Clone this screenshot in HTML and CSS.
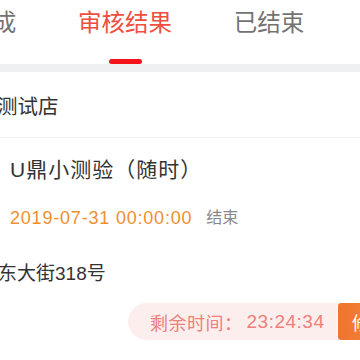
FILE: index.html
```html
<!DOCTYPE html>
<html lang="zh-CN">
<head>
    <meta charset="UTF-8">
    <meta name="viewport" content="width=device-width, initial-scale=1.0">
    <title>审核结果</title>
    <link rel="stylesheet" href="styles.css">
</head>
<body>
    <div class="page">
        <nav class="tabs">
            <div class="tab"><span class="tab-label">待完成</span></div>
            <div class="tab active"><span class="tab-label">审核结果</span></div>
            <div class="tab"><span class="tab-label">已结束</span></div>
        </nav>
        <div class="gap-bar"></div>

        <div class="shop">测试店</div>

        <div class="task">
            <h3 class="task-title">U鼎小测验（随时）</h3>
            <p class="task-time">
                <span class="deadline">2019-07-31 00:00:00</span>
                <span class="deadline-label">结束</span>
            </p>
        </div>

        <p class="address">东大街318号</p>

        <div class="actions">
            <div class="countdown">剩余时间：<span class="clock">23:24:34</span></div>
            <button class="action-btn">修改</button>
        </div>
    </div>
</body>
</html>
```

FILE: styles.css
```css
body {
    margin: 0;
    padding: 0;
    background: #fff;
    font-family: "Liberation Sans", "Noto Sans CJK SC", sans-serif;
    color: #333;
}
.page {
    width: 360px;
    height: 360px;
    overflow: hidden;
}
.tabs {
    display: flex;
    margin-left: -91px;
    height: 64px;
}
.tab {
    flex: none;
    width: 144px;
    display: flex;
    flex-direction: column;
    align-items: center;
}
.tab-label {
    padding-top: 11px;
    font-size: 23.5px;
    line-height: 24px;
    color: #737373;
}
.tab.active .tab-label {
    color: #f04e3e;
}
.tab.active::after {
    content: '';
    width: 33px;
    height: 5px;
    margin-top: 24px;
    border-radius: 3px;
    background: #f5141c;
}
.gap-bar {
    height: 8px;
    background: #eff0f2;
}
.shop {
    height: 65px;
    display: flex;
    align-items: center;
    margin-left: -3px;
    font-size: 20.5px;
    color: #333;
    border-bottom: 1px solid #f0f0f0;
}
.task {
    padding: 17px 10px 0;
}
.task-title {
    margin: 0;
    font-size: 21px;
    line-height: 30px;
    letter-spacing: 1px;
    font-weight: normal;
    color: #333;
}
.task-time {
    display: flex;
    align-items: center;
    margin: 21px 0 0;
    line-height: 24px;
}
.deadline {
    font-size: 18px;
    letter-spacing: 0.8px;
    color: #ef8f30;
}
.deadline-label {
    margin-left: 14px;
    font-size: 16px;
    color: #888;
}
.address {
    margin: 31px 0 0 -2px;
    font-size: 19px;
    line-height: 26px;
    color: #333;
}
.actions {
    display: flex;
    margin-top: 16px;
    padding-left: 128px;
}
.countdown {
    flex: none;
    width: 209px;
    height: 37px;
    box-sizing: border-box;
    padding-left: 22px;
    display: flex;
    align-items: center;
    border-radius: 19px 0 0 19px;
    background: #fdeeee;
    color: #ee7f7a;
    font-size: 18px;
    letter-spacing: 0.5px;
}
.clock {
    font-size: 19px;
    margin-left: 4px;
}
.action-btn {
    flex: none;
    width: 80px;
    height: 37px;
    margin-left: 1px;
    padding: 0 0 0 14px;
    text-align: left;
    border: none;
    border-radius: 3px;
    background: linear-gradient(90deg, #f0742e, #f39240);
    color: #fff;
    font-family: inherit;
    font-size: 18px;
}
```
